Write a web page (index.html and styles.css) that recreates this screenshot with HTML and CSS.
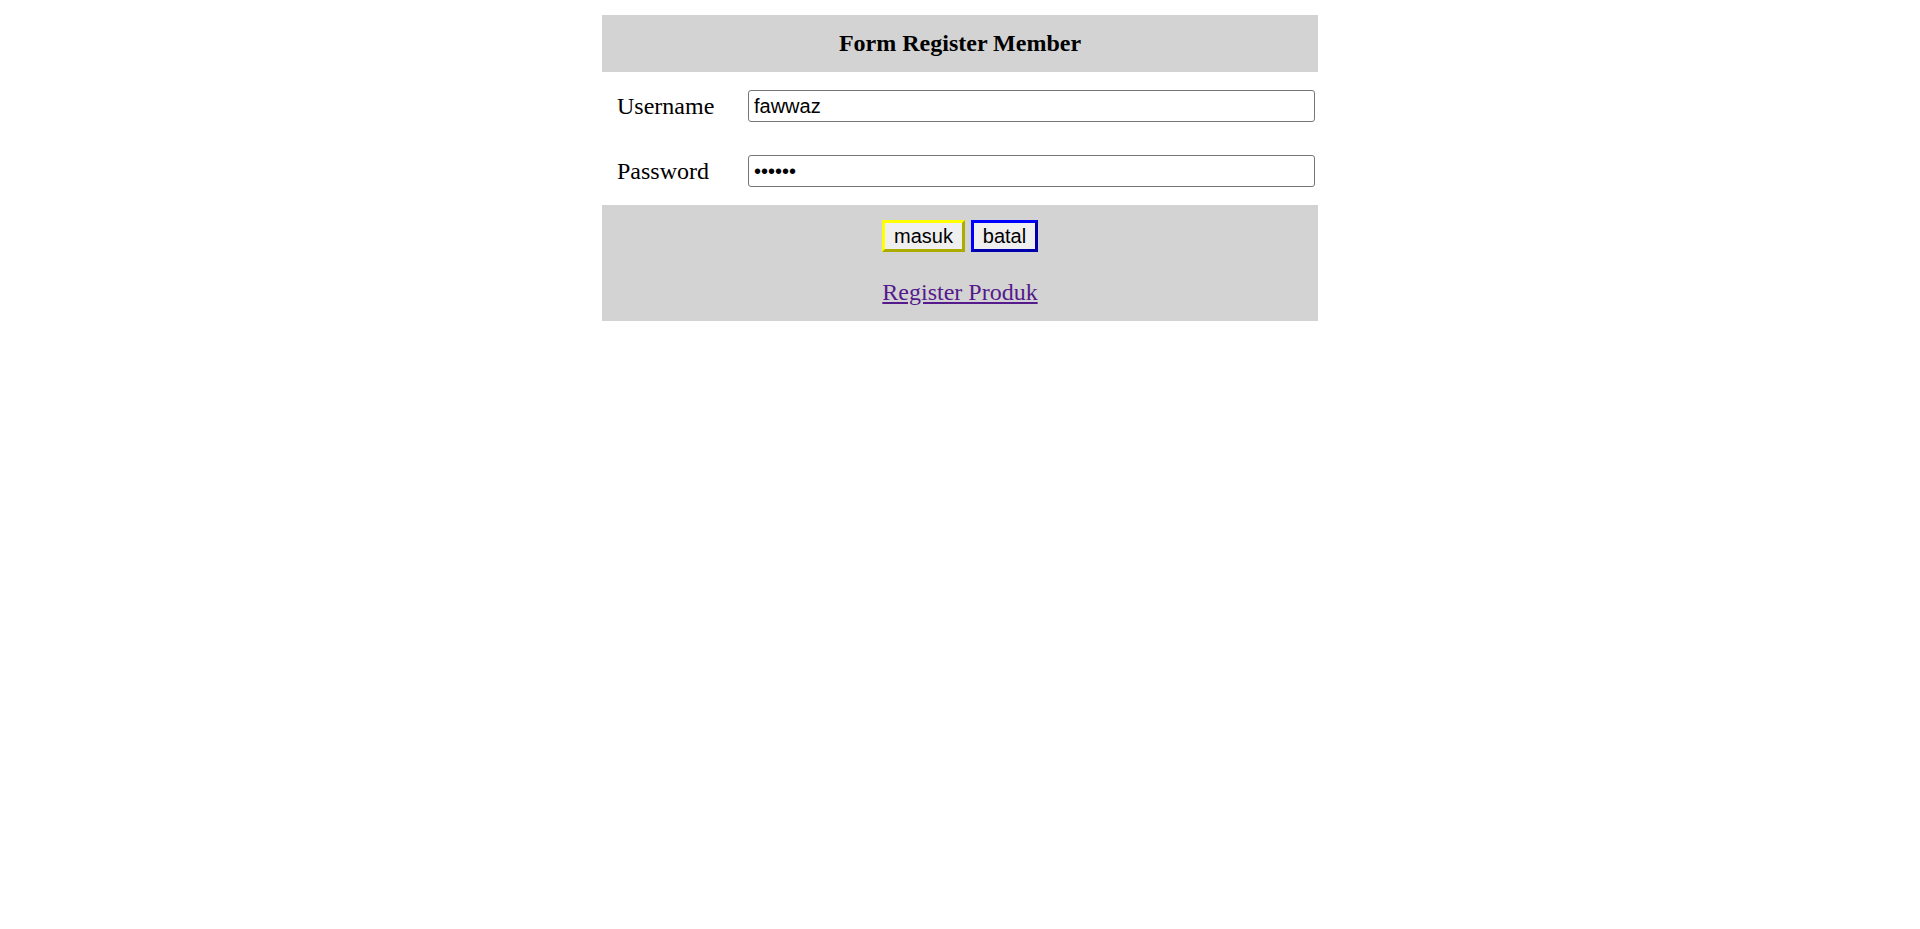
FILE: index.html
```html
<!DOCTYPE html>
<html>
<head>
<meta charset="utf-8">
<title>Form Register Member</title>
<link rel="stylesheet" href="styles.css">
</head>
<body>
<div class="form">
  <div class="header">Form Register Member</div>
  <div class="row">
    <label class="label" for="u">Username</label>
    <div class="field"><input id="u" class="input" type="text" value="fawwaz"></div>
  </div>
  <div class="row">
    <label class="label" for="p">Password</label>
    <div class="field"><input id="p" class="input" type="password" value="123456"></div>
  </div>
  <div class="footer">
    <div class="buttons">
      <button class="btn btn-masuk">masuk</button>
      <button class="btn btn-batal">batal</button>
    </div>
    <a class="link" href="#">Register Produk</a>
  </div>
</div>
</body>
</html>
```

FILE: styles.css
```css
html, body {
  background: #ffffff;
}
body {
  margin: 12px;
  font-family: "Liberation Serif", "Times New Roman", serif;
  font-size: 24px;
  color: #000;
}
.form {
  width: 716px;
  margin: 3px auto 0;
  display: flex;
  flex-direction: column;
  gap: 3px;
}
.header {
  height: 57px;
  background: #d3d3d3;
  display: flex;
  align-items: center;
  justify-content: center;
  font-weight: bold;
  font-size: 24px;
}
.row {
  height: 62px;
  display: grid;
  grid-template-columns: 127px 1fr;
  column-gap: 3px;
  align-items: center;
}
.label {
  padding-left: 15px;
  font-size: 24px;
  line-height: 27px;
}
.field {
  display: flex;
  align-items: center;
}
.input {
  box-sizing: border-box;
  margin: 0 0 0 16px;
  width: 567px;
  height: 32px;
  padding: 1px 5px;
  border: 1.5px solid #767676;
  border-radius: 3px;
  font-family: "Liberation Sans", Arial, sans-serif;
  font-size: 20px;
  color: #000;
  background: #fff;
}
.footer {
  box-sizing: border-box;
  height: 116px;
  background: #d3d3d3;
  padding-top: 15px;
  display: flex;
  flex-direction: column;
  align-items: center;
}
.buttons {
  display: flex;
  gap: 6px;
}
.btn {
  box-sizing: border-box;
  height: 32px;
  padding: 0;
  margin: 0;
  font-family: "Liberation Sans", Arial, sans-serif;
  font-size: 20px;
  color: #000;
  background: #efefef;
  text-align: center;
}
.btn-masuk {
  width: 83px;
  border: 3px outset #ffff00;
}
.btn-batal {
  width: 67px;
  border: 3px outset #0000ff;
}
.link {
  margin-top: 27px;
  font-size: 24px;
  line-height: 27px;
  color: #551a8b;
  text-decoration: underline;
}
```
